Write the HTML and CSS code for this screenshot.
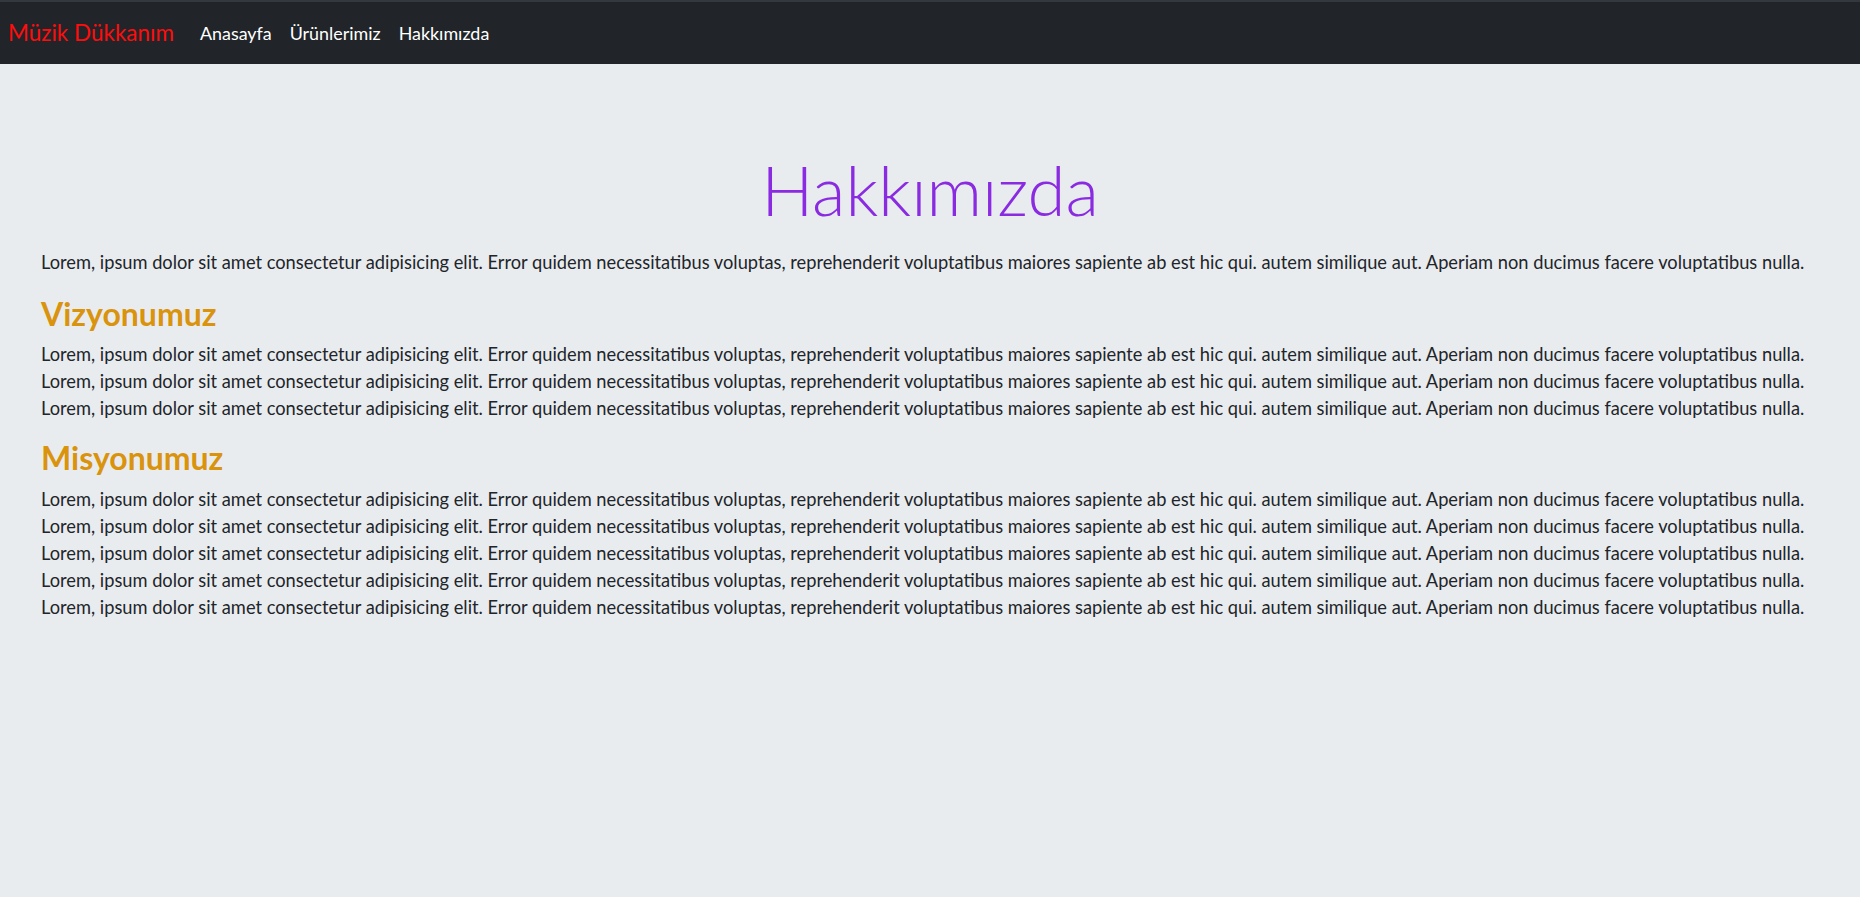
FILE: index.html
```html
<!DOCTYPE html>
<html lang="tr">
<head>
<meta charset="utf-8">
<title>Hakkımızda</title>
<link rel="stylesheet" href="styles.css">
</head>
<body>
<nav class="navbar">
  <a class="brand" href="#">Müzik Dükkanım</a>
  <ul class="nav">
    <li><a class="nav-link" href="#">Anasayfa</a></li>
    <li><a class="nav-link" href="#">Ürünlerimiz</a></li>
    <li><a class="nav-link" href="#">Hakkımızda</a></li>
  </ul>
</nav>
<main class="content">
  <h1 class="title">Hakkımızda</h1>
  <p class="text intro">Lorem, ipsum dolor sit amet consectetur adipisicing elit. Error quidem necessitatibus voluptas, reprehenderit voluptatibus maiores sapiente ab est hic qui. autem similique aut. Aperiam non ducimus facere voluptatibus nulla.</p>
  <h3 class="section-title">Vizyonumuz</h3>
  <div class="text">
    <div class="line">Lorem, ipsum dolor sit amet consectetur adipisicing elit. Error quidem necessitatibus voluptas, reprehenderit voluptatibus maiores sapiente ab est hic qui. autem similique aut. Aperiam non ducimus facere voluptatibus nulla.</div>
    <div class="line">Lorem, ipsum dolor sit amet consectetur adipisicing elit. Error quidem necessitatibus voluptas, reprehenderit voluptatibus maiores sapiente ab est hic qui. autem similique aut. Aperiam non ducimus facere voluptatibus nulla.</div>
    <div class="line">Lorem, ipsum dolor sit amet consectetur adipisicing elit. Error quidem necessitatibus voluptas, reprehenderit voluptatibus maiores sapiente ab est hic qui. autem similique aut. Aperiam non ducimus facere voluptatibus nulla.</div>
  </div>
  <h3 class="section-title">Misyonumuz</h3>
  <div class="text">
    <div class="line">Lorem, ipsum dolor sit amet consectetur adipisicing elit. Error quidem necessitatibus voluptas, reprehenderit voluptatibus maiores sapiente ab est hic qui. autem similique aut. Aperiam non ducimus facere voluptatibus nulla.</div>
    <div class="line">Lorem, ipsum dolor sit amet consectetur adipisicing elit. Error quidem necessitatibus voluptas, reprehenderit voluptatibus maiores sapiente ab est hic qui. autem similique aut. Aperiam non ducimus facere voluptatibus nulla.</div>
    <div class="line">Lorem, ipsum dolor sit amet consectetur adipisicing elit. Error quidem necessitatibus voluptas, reprehenderit voluptatibus maiores sapiente ab est hic qui. autem similique aut. Aperiam non ducimus facere voluptatibus nulla.</div>
    <div class="line">Lorem, ipsum dolor sit amet consectetur adipisicing elit. Error quidem necessitatibus voluptas, reprehenderit voluptatibus maiores sapiente ab est hic qui. autem similique aut. Aperiam non ducimus facere voluptatibus nulla.</div>
    <div class="line">Lorem, ipsum dolor sit amet consectetur adipisicing elit. Error quidem necessitatibus voluptas, reprehenderit voluptatibus maiores sapiente ab est hic qui. autem similique aut. Aperiam non ducimus facere voluptatibus nulla.</div>
  </div>
</main>
</body>
</html>
```
FILE: styles.css
```css
* { box-sizing: border-box; }
html, body { margin: 0; padding: 0; }
body {
  background: #e9ecef;
  color: #212529;
  font-family: Lato, "Noto Sans", sans-serif;
  font-size: 18.25px;
  line-height: 27px;
  min-height: 897px;
}
a { text-decoration: none; }

.navbar {
  display: flex;
  align-items: center;
  height: 64px;
  background: #212529;
  border-top: 2px solid #33383e;
  padding: 0 8px;
}
.brand {
  color: #ff0d0d;
  font-size: 22.5px;
  line-height: 34px;
  margin-right: 26px;
}
.nav {
  display: flex;
  list-style: none;
  margin: 0;
  padding: 0;
  gap: 18px;
}
.nav-link {
  color: #ffffff;
  font-size: 17.9px;
  line-height: 27px;
}

.content {
  padding: 85px 41px 0;
}
.title {
  margin: 0 0 17px;
  text-align: center;
  color: #8a2be2;
  font-weight: 300;
  font-size: 69px;
  line-height: 1.2;
}
.text {
  margin: 0 0 17px;
  white-space: nowrap;
}
.text.intro {
  margin-bottom: 19px;
}
.section-title {
  margin: 0 0 8px;
  color: #d9930d;
  font-size: 32px;
  font-weight: 700;
  line-height: 1.2;
}
```
